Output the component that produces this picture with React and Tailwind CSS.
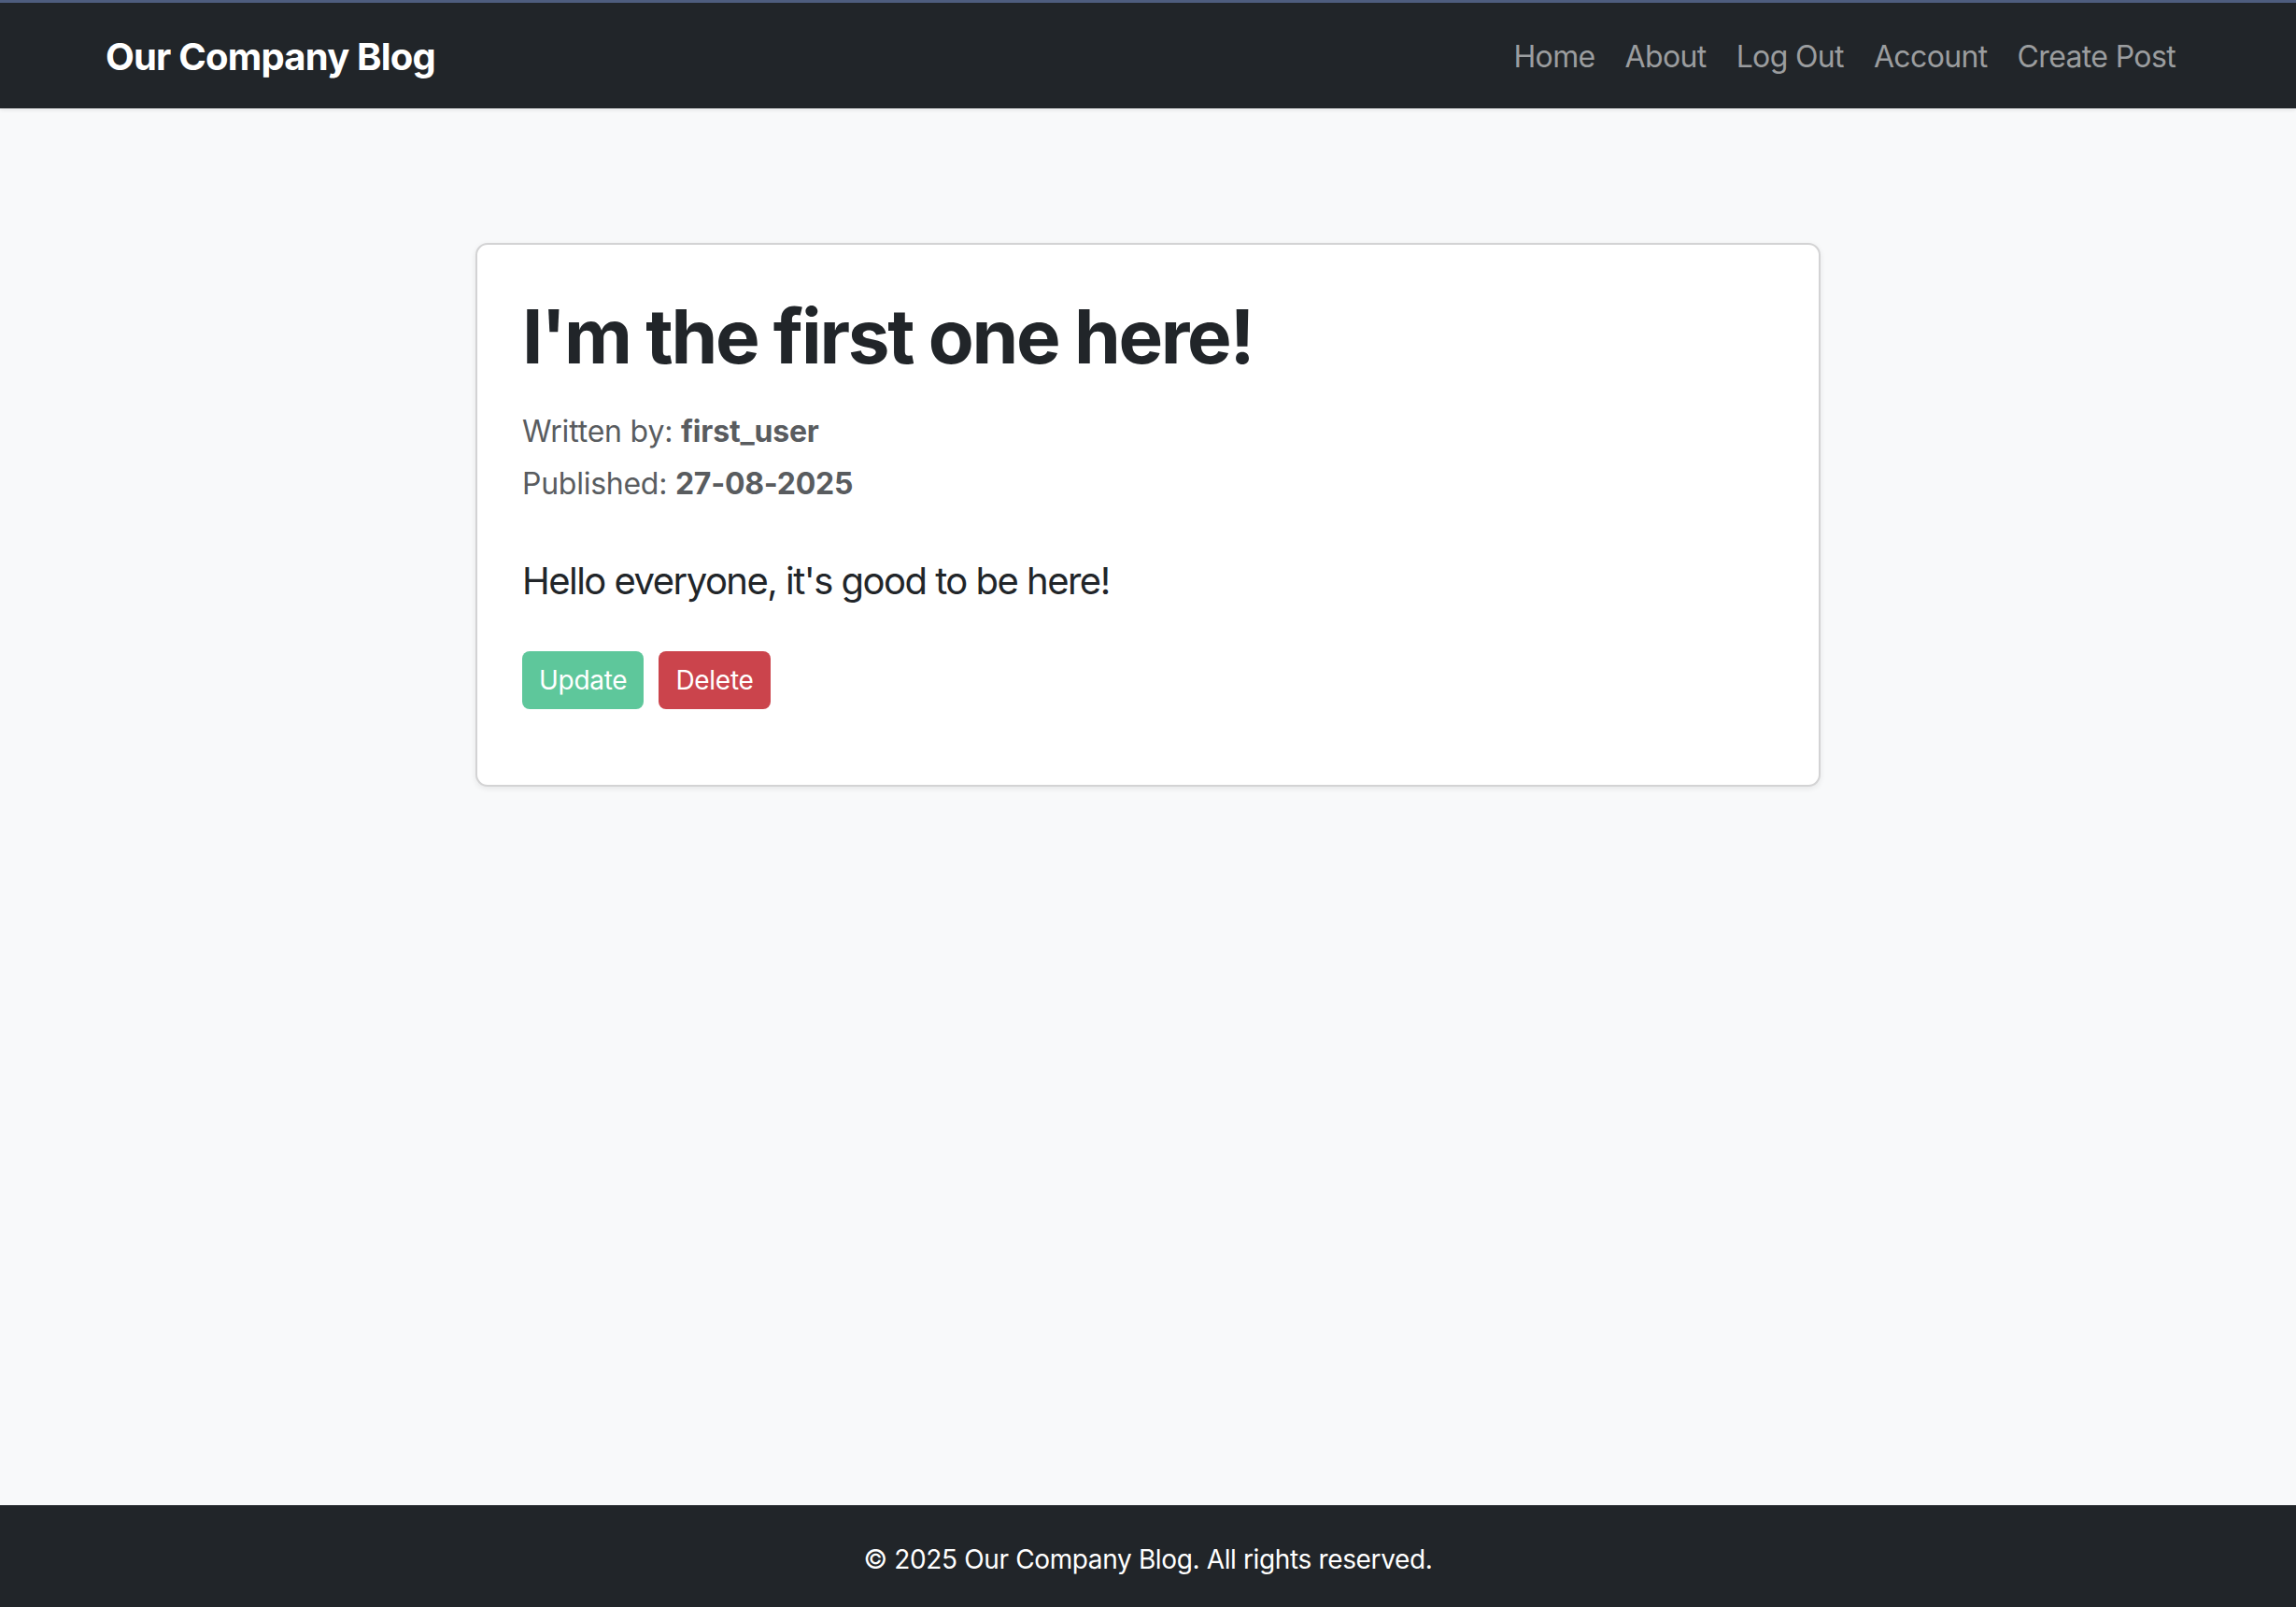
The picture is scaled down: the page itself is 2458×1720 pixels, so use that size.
// App.jsx - single blog post page
const navLinks = ['Home', 'About', 'Log Out', 'Account', 'Create Post'];

const App = () => {
    return (
        <div className="min-h-screen flex flex-col bg-[#f8f9fa] font-['Inter','Liberation_Sans',sans-serif] text-[#212529]">
            {/* Navbar */}
            <nav className="h-[116px] border-t-[3px] border-[#4e5d7e] bg-[#212529] shadow-[0_2px_4px_rgba(0,0,0,0.08)]">
                <div className="mx-auto w-[2280px] h-full px-[24px] pt-[3px] flex items-center justify-between">
                    <a href="#" className="text-[40px] font-bold text-white tracking-[-0.02em]">
                        Our Company Blog
                    </a>
                    <ul className="flex items-center">
                        {navLinks.map((link) => (
                            <li key={link}>
                                <a href="#" className="block px-[16px] text-[32px] tracking-[-0.02em] text-[#9b9d9f] hover:text-white">
                                    {link}
                                </a>
                            </li>
                        ))}
                    </ul>
                </div>
            </nav>

            {/* Main content */}
            <main className="flex-1 pt-[144px]">
                <div className="mx-auto w-[1440px] bg-white border-2 border-[#d3d3d4] rounded-[13px] shadow-[0_2px_6px_rgba(0,0,0,0.08)]">
                    <div className="p-[48px]">
                        <h1 className="text-[80px] leading-[1.2] font-bold tracking-[-0.029em] pt-[2px] mb-[30px]">
                            I'm the first one here!
                        </h1>
                        <p className="text-[32px] leading-[1.5] tracking-[-0.006em] text-[#595c5f] mb-[8px]">
                            Written by: <strong className="font-bold">first_user</strong>
                        </p>
                        <p className="text-[32px] leading-[1.5] tracking-[-0.008em] text-[#595c5f] mb-[50px]">
                            Published: <strong className="font-bold">27-08-2025</strong>
                        </p>
                        <p className="text-[40px] leading-[1.5] tracking-[-0.038em] mb-[45px]">
                            Hello everyone, it's good to be here!
                        </p>
                        <div className="flex gap-[16px] mb-[33px]">
                            <button className="h-[62px] px-[18px] rounded-[8px] bg-[#5ec79b] text-white text-[28px] tracking-[-0.01em]">
                                Update
                            </button>
                            <button className="h-[62px] px-[18px] rounded-[8px] bg-[#cb444c] text-white text-[28px] tracking-[-0.01em]">
                                Delete
                            </button>
                        </div>
                    </div>
                </div>
            </main>

            {/* Footer */}
            <footer className="h-[109px] pt-[6px] bg-[#212529] flex items-center justify-center">
                <p className="text-[28px] tracking-[-0.013em] text-white">© 2025 Our Company Blog. All rights reserved.</p>
            </footer>
        </div>
    );
};

export default App;
